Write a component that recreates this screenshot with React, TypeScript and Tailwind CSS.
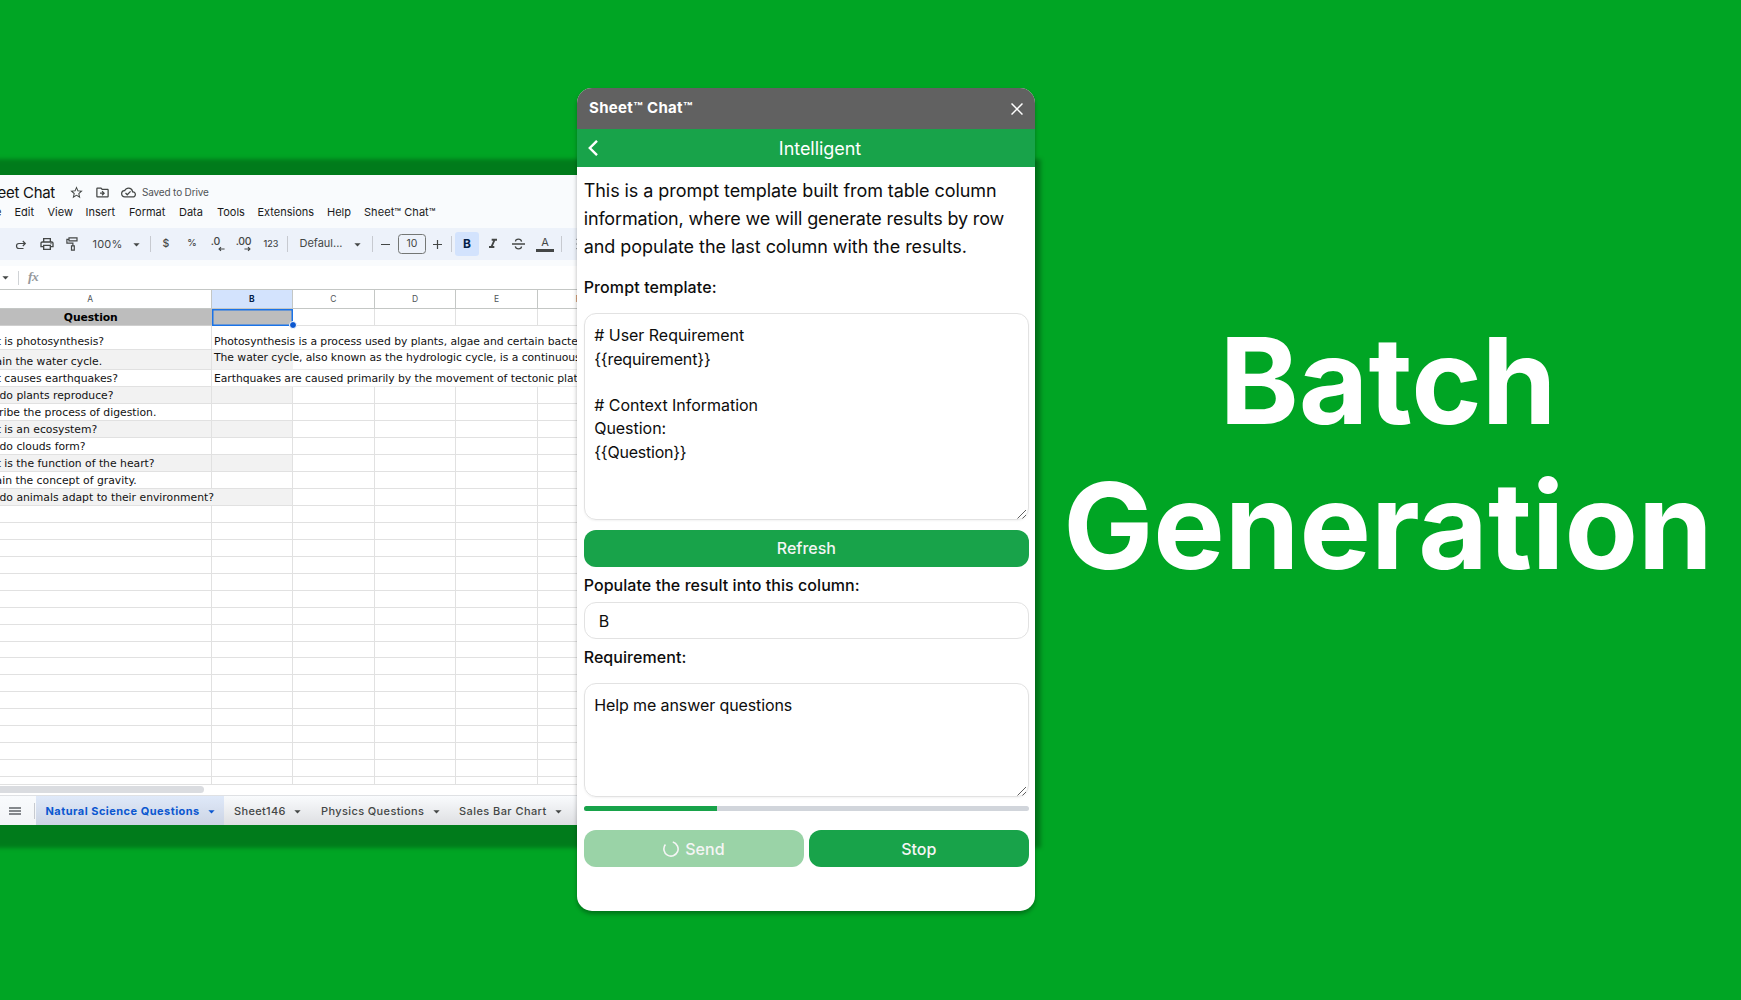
import type { ReactNode } from 'react';
import {
  MdArrowDropDown,
  MdFormatItalic,
  MdOutlineCloudDone,
  MdOutlineDriveFileMove,
  MdOutlinePrint,
  MdStarBorder,
} from 'react-icons/md';

const questions = [
  'How do plants reproduce?',
  'Describe the process of digestion.',
  'What is an ecosystem?',
  'How do clouds form?',
  'What is the function of the heart?',
  'Explain the concept of gravity.',
  'How do animals adapt to their environment?',
];

const menu = [
  { label: 'Edit', className: 'w-[33px]' },
  { label: 'View', className: 'w-[38px]' },
  { label: 'Insert', className: 'w-[43.5px]' },
  { label: 'Format', className: 'w-[50px]' },
  { label: 'Data', className: 'w-[38px]' },
  { label: 'Tools', className: 'w-[40.5px]' },
  { label: 'Extensions', className: 'w-[69.5px]' },
  { label: 'Help', className: 'w-[37px]' },
  { label: 'Sheet™ Chat™', className: 'w-[80px] tracking-[0.06px]' },
];

const blankRows = Array.from({ length: 17 }, (_, i) => i);

function Tool({ className, children }: { className: string; children: ReactNode }) {
  return <div className={`flex h-full shrink-0 items-center justify-center ${className}`}>{children}</div>;
}

function Divider() {
  return <span className="h-4 w-px shrink-0 bg-[#c7cad0]" />;
}

function Caret({ className = 'text-[#444746]' }: { className?: string }) {
  return <MdArrowDropDown className={`size-[15px] shrink-0 ${className}`} />;
}

function DecimalArrow({ flip }: { flip?: boolean }) {
  return (
    <svg
      viewBox="0 0 8 6"
      className={`absolute -bottom-[5px] h-[6px] w-[7px] ${flip ? 'right-0 rotate-180' : '-right-[5px]'}`}
      fill="none"
      stroke="#444746"
      strokeWidth="1.3"
    >
      <path d="M7.5 3H1.2M3.4 .8 1.2 3l2.2 2.2" />
    </svg>
  );
}

function TitleBar() {
  return (
    <div className="h-[53px] bg-[#f9fbfd]">
      <div className="flex h-[28px] items-center pt-[8px]">
        <div className="-mt-px flex w-[55px] shrink-0 justify-end overflow-hidden text-[15px] leading-5 tracking-[-0.28px] whitespace-nowrap text-[#111]">
          Sheet Chat
        </div>
        <MdStarBorder className="-mt-px ml-[14px] size-[15px] text-[#444746]" />
        <MdOutlineDriveFileMove className="-mt-px ml-[11px] size-[15px] text-[#444746]" />
        <MdOutlineCloudDone className="-mt-px ml-[11px] size-[15px] text-[#444746]" />
        <span className="-mt-px ml-[6px] text-[10px] tracking-[-0.16px] text-[#505356]">Saved to Drive</span>
      </div>
      <div className="flex h-[18px] items-center text-[11px] whitespace-nowrap text-[#1a1a1a]">
        <span className="flex w-[14.5px] shrink-0 justify-end overflow-hidden pr-[13px]">File</span>
        {menu.map((m) => (
          <span key={m.label} className={`shrink-0 ${m.className}`}>
            {m.label}
          </span>
        ))}
      </div>
    </div>
  );
}

function Toolbar() {
  return (
    <div className="flex h-[32px] items-center overflow-hidden bg-[#edf2fa] pl-[12px] text-[11px] text-[#444746]">
      <Tool className="w-[18px]">
        <svg viewBox="0 0 12 10" className="h-[10px] w-[12px] shrink-0 translate-y-px" fill="none" stroke="currentColor" strokeWidth="1.2">
          <path d="M7.8 1 10.3 3.5 7.8 6M10 3.5H4a2.4 2.4 0 0 0 0 5h4.5" />
        </svg>
      </Tool>
      <Tool className="w-[33px]">
        <MdOutlinePrint className="size-[16px] shrink-0" />
      </Tool>
      <Tool className="w-[18px]">
        <svg viewBox="0 0 12 14" className="h-[14px] w-[12px] shrink-0" fill="none" stroke="currentColor" strokeWidth="1.2">
          <path d="M3 .9h8v3H3zM3 2.3H.9v3.900h6v2.500M5.500 8.800h2.800v4.300H5.500z" />
        </svg>
      </Tool>
      <Tool className="w-[53px] tracking-[0.15px]">100%</Tool>
      <Tool className="w-[5px]">
        <Caret />
      </Tool>
      <Tool className="w-[23px]">
        <Divider />
      </Tool>
      <Tool className="w-[8px] pb-px text-[10.5px] font-medium">$</Tool>
      <Tool className="w-[44px] pb-px text-[9.5px] font-medium">%</Tool>
      <Tool className="w-[8px] text-[10.5px] font-medium">
        <span className="relative -mt-[5px] -ml-[5px] leading-[10px]">
          .0
          <DecimalArrow />
        </span>
      </Tool>
      <Tool className="w-[44px] text-[10.5px] font-medium">
        <span className="relative -mt-[5px] -ml-px leading-[10px] tracking-[-0.3px]">
          .00
          <DecimalArrow flip />
        </span>
      </Tool>
      <Tool className="w-[10px] pb-px text-[9px] font-medium">123</Tool>
      <Tool className="w-[22px]">
        <Divider />
      </Tool>
      <Tool className="w-[46px] pb-px">Defaul...</Tool>
      <Tool className="w-[26px]">
        <Caret />
      </Tool>
      <Tool className="w-[5px]">
        <Divider />
      </Tool>
      <Tool className="w-[21px]">
        <span className="h-px w-[9px] shrink-0 bg-[#444746]" />
      </Tool>
      <Tool className="w-[32px]">
        <span className="flex h-[20px] w-[28px] shrink-0 items-center justify-center rounded-[3.5px] border border-[#747775] text-[10.5px]">
          10
        </span>
      </Tool>
      <Tool className="w-[18px]">
        <svg viewBox="0 0 9 9" className="size-[9px] shrink-0" stroke="currentColor" strokeWidth="1.2">
          <path d="M0 4.5h9M4.5 0v9" />
        </svg>
      </Tool>
      <Tool className="w-[10px]">
        <Divider />
      </Tool>
      <Tool className="w-[22px]">
        <span className="flex size-[24px] shrink-0 items-center justify-center rounded-[3px] bg-[#d3e3fd] text-[12px] font-bold text-[#041e49]">
          B
        </span>
      </Tool>
      <Tool className="w-[29px]">
        <MdFormatItalic className="size-[16px] shrink-0" />
      </Tool>
      <Tool className="w-[23px]">
        <svg viewBox="0 0 13 12" className="h-[12px] w-[13px] shrink-0" fill="none" stroke="currentColor" strokeWidth="1.3">
          <path d="M0 6h13M9.6 3.6C9.3 2 8.2 1.2 6.5 1.2 4.7 1.2 3.5 2 3.5 3.500M3.300 8.400c.3 1.600 1.500 2.400 3.200 2.400 1.800 0 3-.8 3-2.200" />
        </svg>
      </Tool>
      <Tool className="w-[30px]">
        <span className="flex w-[18.5px] flex-col items-center text-[11px] leading-[13px]">
          A
          <span className="h-[3px] w-full bg-[#444746]" />
        </span>
      </Tool>
      <Tool className="w-[3px]">
        <Divider />
      </Tool>
      <Tool className="w-[26px] justify-end">
        <svg viewBox="0 0 14 12" className="h-[12px] w-[13px] shrink-0 opacity-60" stroke="currentColor">
          <path d="M0 1h14M0 6h14M0 11h14" />
        </svg>
      </Tool>
    </div>
  );
}

function FormulaBar() {
  return (
    <div className="mt-[6px] flex h-[23px] items-center bg-white">
      <Caret className="-ml-[2px] text-[#444746]" />
      <span className="ml-[5px] h-[14px] w-px bg-[#d0d3d6]" />
      <span className="ml-[9px] font-['Liberation_Serif',serif] text-[13.5px] font-bold tracking-[-0.6px] text-[#96999c] italic">fx</span>
    </div>
  );
}

function Blanks() {
  return (
    <>
      <span className="w-[81.6px] shrink-0 border-r border-b border-[#e1e1e1]" />
      <span className="w-[81.6px] shrink-0 border-r border-b border-[#e1e1e1]" />
      <span className="w-[81.6px] shrink-0 border-r border-b border-[#e1e1e1]" />
      <span className="w-[81.6px] shrink-0 border-r border-b border-[#e1e1e1]" />
    </>
  );
}

function AnswerRow({
  question,
  answer,
  height,
  shaded,
  raise,
}: {
  question: string;
  answer: string;
  height: string;
  shaded?: boolean;
  raise?: boolean;
}) {
  const tone = shaded ? 'bg-[#f2f2f2]' : 'bg-white';
  return (
    <div className={`flex ${height}`}>
      <span className={`flex w-[241.5px] shrink-0 items-end border-r border-b border-[#e1e1e1] pb-px pl-[2.5px] ${tone}`}>
        {question}
      </span>
      <span className={`flex w-[81.6px] shrink-0 items-end border-b border-[#ececec] pl-[2.5px] ${raise ? 'pb-[4.5px]' : 'pb-px'} ${tone}`}>
        <span className="tracking-[-0.04px]">{answer}</span>
      </span>
      <span className="w-[400px] shrink-0 border-b border-[#ececec]" />
    </div>
  );
}

function Grid() {
  return (
    <div className="h-[496px] overflow-hidden border-b border-[#e1e1e1] bg-white">
      <div className="-ml-[30px] flex h-[19.5px] items-center border-y border-[#c4c7c5] text-[8.5px] text-[#505458]">
        <span className="flex h-full w-[241.5px] shrink-0 items-center justify-center border-r border-[#c4c7c5] pt-px">A</span>
        <span className="flex h-full w-[81.6px] shrink-0 items-center justify-center border-r border-[#c4c7c5] bg-[#d3e3fd] pt-px font-bold text-[#041e49]">
          B
        </span>
        {['C', 'D', 'E', 'F'].map((c) => (
          <span key={c} className="flex h-full w-[81.6px] shrink-0 items-center justify-center border-r border-[#c4c7c5] pt-px">
            {c}
          </span>
        ))}
      </div>
      <div className="-ml-[30px] font-['DejaVu_Sans',sans-serif] text-[10.8px] leading-[13px] whitespace-nowrap text-[#111]">
        <div className="flex h-[17.1px]">
          <span className="flex w-[241.5px] shrink-0 items-end justify-center border-b border-[#cfcfcf] bg-[#bdbdbd] pb-px font-bold tracking-[-0.1px] text-black">
            Question
          </span>
          <span className="relative w-[81.6px] shrink-0 border-[1.5px] border-[#1a73e8] bg-[#bdbdbd] ring-[0.5px] ring-[#1a73e8] ring-inset">
            <span className="absolute -right-[5px] -bottom-[4.5px] z-10 size-[8px] rounded-full border border-white bg-[#0b57d0]" />
          </span>
          <Blanks />
        </div>
        <AnswerRow
          question="What is photosynthesis?"
          answer="Photosynthesis is a process used by plants, algae and certain bacteria"
          height="h-[24px]"
        />
        <AnswerRow
          question="Explain the water cycle."
          answer="The water cycle, also known as the hydrologic cycle, is a continuous"
          height="h-[20.4px]"
          shaded
          raise
        />
        <AnswerRow
          question="What causes earthquakes?"
          answer="Earthquakes are caused primarily by the movement of tectonic plates"
          height="h-[17px]"
        />
        {questions.map((q, i) => {
          const tone = i % 2 === 0 ? 'bg-[#f2f2f2]' : 'bg-white';
          return (
            <div key={q} className="flex h-[16.98px]">
              <span
                className={`flex w-[241.5px] shrink-0 items-end border-b border-[#e1e1e1] pb-px pl-[2.5px] ${
                  i === 6 ? '' : 'border-r'
                } ${tone}`}
              >
                <span className="relative z-10">{q}</span>
              </span>
              <span className={`w-[81.6px] shrink-0 border-r border-b border-[#e1e1e1] ${tone}`} />
              <Blanks />
            </div>
          );
        })}
        {blankRows.map((r) => (
          <div key={r} className="flex h-[16.98px]">
            <span className="w-[241.5px] shrink-0 border-r border-b border-[#e1e1e1]" />
            <span className="w-[81.6px] shrink-0 border-r border-b border-[#e1e1e1]" />
            <Blanks />
          </div>
        ))}
      </div>
    </div>
  );
}

function SheetTabs() {
  return (
    <div className="flex h-[30px] items-center border-t border-[#dfe1e4] bg-linear-to-b from-[#f9fbfd] to-[#dedfe2] text-[11px] font-medium whitespace-nowrap text-[#444746]">
      <div className="flex h-full w-[36px] shrink-0 items-center bg-linear-to-b from-[#f9fbfd] to-[#f2f4f7] pl-[9px]">
        <svg viewBox="0 0 12 8" className="h-[8px] w-[12px]" stroke="#5f6368" strokeWidth="1.4">
          <path d="M0 1h12M0 4h12M0 7h12" />
        </svg>
        <span className="ml-[13px] h-4 w-px bg-[#c7cad0]" />
      </div>
      <div className="flex h-full w-[188px] shrink-0 items-center bg-linear-to-b from-[#dfe9f9] to-[#ccd4e4] pt-px pl-[9.5px] font-bold tracking-[0.47px] text-[#0b57d0]">
        <span className="w-[158.5px]">Natural Science Questions</span>
        <Caret className="text-[#0b57d0]" />
      </div>
      <div className="flex w-[87px] shrink-0 items-center pt-px pl-[10px] tracking-[0.34px]">
        <span className="w-[56px]">Sheet146</span>
        <Caret />
      </div>
      <div className="flex w-[138px] shrink-0 items-center pt-px pl-[10px] tracking-[0.38px]">
        <span className="w-[107.5px]">Physics Questions</span>
        <Caret />
      </div>
      <div className="flex w-[120px] shrink-0 items-center pt-px pl-[10px] tracking-[0.43px]">
        <span className="w-[92px]">Sales Bar Chart</span>
        <Caret />
      </div>
    </div>
  );
}

function Spreadsheet() {
  return (
    <section className="mt-[175px] h-[650px] w-[1021px] shrink-0 bg-[#f9fbfd] shadow-[0_3.5px_4px_19.5px_rgba(0,0,0,0.25)]">
      <div className="w-[590px] overflow-hidden">
        <TitleBar />
        <Toolbar />
        <FormulaBar />
        <Grid />
        <div className="h-[10px] bg-white pt-px">
          <div className="h-[7px] w-[204px] rounded-r-full bg-[#dadce0]" />
        </div>
        <SheetTabs />
      </div>
    </section>
  );
}

function Grip() {
  return (
    <svg viewBox="0 0 10 10" className="absolute right-[1px] bottom-0 size-[10px]" stroke="#606060" strokeWidth="1">
      <path d="M.5 9.5 9 1M5.500 9.500 9 6" />
    </svg>
  );
}

function ChatPanel() {
  return (
    <section className="relative z-10 mt-[88px] -ml-[444px] flex h-[823px] w-[458px] shrink-0 flex-col overflow-hidden rounded-[15px] bg-white whitespace-nowrap text-[#0d0d0d] shadow-[0_3px_4px_rgba(0,0,0,0.3)]">
      <header className="flex h-[41.3px] shrink-0 items-center justify-between bg-[#616161] pr-[12px] pl-[12px] text-white">
        <h2 className="pb-px text-[15px] leading-[22px] font-bold tracking-[0.33px]">Sheet™ Chat™</h2>
        <svg viewBox="0 0 12 12" className="size-[12px]" stroke="white" strokeWidth="1.5">
          <path d="M.5.5l11 11M11.5.5l-11 11" />
        </svg>
      </header>
      <div className="flex h-[37.4px] shrink-0 items-center bg-[#18a34a] pl-[11px] text-white">
        <svg viewBox="0 0 10 16" className="h-[16px] w-[10px]" fill="none" stroke="white" strokeWidth="2.4">
          <path d="M9 .8 1.8 8 9 15.2" />
        </svg>
        <span className="flex-1 pt-[1.5px] pl-[7px] text-center text-[18px] tracking-[-0.05px]">Intelligent</span>
      </div>
      <div className="flex flex-col pt-[10.5px] pr-[6px] pl-[6.7px]">
        <p className="text-[18px] leading-[28px]">
          <span className="block tracking-[-0.06px]">This is a prompt template built from table column</span>
          <span className="block tracking-[-0.15px]">information, where we will generate results by row</span>
          <span className="block tracking-[-0.05px]">and populate the last column with the results.</span>
        </p>
        <label className="mt-[13.5px] leading-6 font-medium tracking-[0.12px]">Prompt template:</label>
        <div className="relative mt-[14.6px] h-[206.4px] rounded-[12px] border border-[#e2e2e2] pt-[10px] pr-[10px] pl-[9.5px] leading-[23.3px] tracking-[-0.03px] whitespace-pre shadow-[0_1px_2px_rgba(0,0,0,0.05)]">
          {'# User Requirement\n'}
          <span className="tracking-[-0.15px]">{'{{requirement}}\n'}</span>
          {'\n# Context Information\nQuestion:\n'}
          <span className="tracking-[-0.22px]">{'{{Question}}'}</span>
          <Grip />
        </div>
        <button className="mt-[10px] h-[37.3px] rounded-[12px] bg-[#18a34a] font-medium text-[#f5f5f5]">Refresh</button>
        <label className="mt-[5.8px] leading-6 font-medium tracking-[0.06px]">Populate the result into this column:</label>
        <div className="mt-[5.2px] flex h-[37px] items-center rounded-[12px] border border-[#e2e2e2] pt-px pl-[14px]">B</div>
        <label className="mt-[5.8px] leading-6 font-medium tracking-[0.06px]">Requirement:</label>
        <div className="relative mt-[14.5px] h-[113.7px] rounded-[12px] border border-[#e2e2e2] pt-[9.6px] pr-[10px] pl-[9.5px] leading-[23.3px] tracking-[-0.1px] shadow-[0_1px_2px_rgba(0,0,0,0.05)]">
          Help me answer questions
          <Grip />
        </div>
        <div className="mt-[9.5px] h-[4.5px] overflow-hidden rounded-full bg-[#d1d5db]">
          <div className="h-full w-[30%] bg-[#18a34a]" />
        </div>
        <div className="mt-[19px] grid grid-cols-2 gap-[4.5px] font-medium text-[#f5f5f5]">
          <button className="flex h-[37.3px] items-center justify-center gap-[6px] rounded-[12px] bg-[#9ad3a7]">
            <svg viewBox="0 0 16 16" className="size-[16px]" fill="none" stroke="currentColor" strokeWidth="1.6">
              <path d="M9.8 1.1A7.1 7.1 0 1 1 2.4 3.600" />
            </svg>
            Send
          </button>
          <button className="h-[37.3px] rounded-[12px] bg-[#18a34a]">Stop</button>
        </div>
      </div>
    </section>
  );
}

export default function App() {
  return (
    <main className="flex h-[1000px] w-[1741px] items-start overflow-hidden bg-[#00a524] font-[Inter,sans-serif]">
      <Spreadsheet />
      <ChatPanel />
      <h1 className="mt-[308px] flex-1 text-center text-[120px] leading-[145px] font-bold text-white">
        Batch
        <br />
        Generation
      </h1>
    </main>
  );
}
